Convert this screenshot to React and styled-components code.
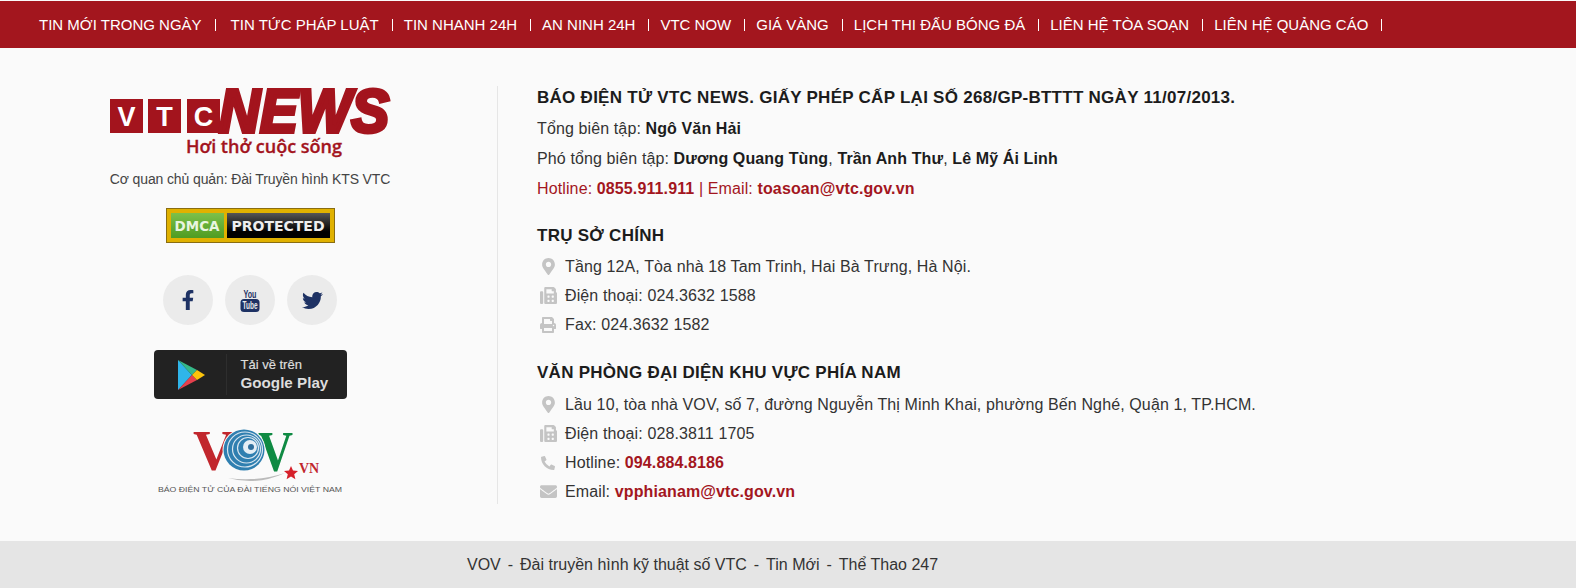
import React from "react";
import styled, { createGlobalStyle } from "styled-components";
import { FaFacebookF, FaTwitter, FaMapMarkerAlt, FaFax, FaPrint, FaPhoneAlt, FaEnvelope } from "react-icons/fa";

const menu = [
  "TIN MỚI TRONG NGÀY",
  "TIN TỨC PHÁP LUẬT",
  "TIN NHANH 24H",
  "AN NINH 24H",
  "VTC NOW",
  "GIÁ VÀNG",
  "LỊCH THI ĐẤU BÓNG ĐÁ",
  "LIÊN HỆ TÒA SOẠN",
  "LIÊN HỆ QUẢNG CÁO",
];

const footerLinks = ["VOV", "Đài truyền hình kỹ thuật số VTC", "Tin Mới", "Thể Thao 247"];

function VtcLogo() {
  return (
    <svg width="282" height="74" viewBox="0 0 282 74" overflow="visible">
      <rect x="1" y="14" width="33" height="34" fill="#a3141d" />
      <rect x="39" y="14" width="33" height="34" fill="#a3141d" />
      <rect x="78" y="14" width="33" height="34" fill="#a3141d" />
      <text x="17.5" y="41" textAnchor="middle" fontFamily="Liberation Sans" fontSize="27" fontWeight="700" fill="#fff">V</text>
      <text x="55.5" y="41" textAnchor="middle" fontFamily="Liberation Sans" fontSize="27" fontWeight="700" fill="#fff">T</text>
      <text x="94.5" y="41" textAnchor="middle" fontFamily="Liberation Sans" fontSize="27" fontWeight="700" fill="#fff">C</text>
      <text x="110" y="47" fontFamily="Liberation Sans" fontSize="62" fontWeight="700" fontStyle="italic" fill="#a3141d" stroke="#a3141d" strokeWidth="4" textLength="170" lengthAdjust="spacingAndGlyphs">NEWS</text>
      <text x="77" y="68" fontFamily="Open Sans" fontSize="17.5" fontWeight="600" fill="#a3141d" stroke="#a3141d" strokeWidth="0.3" textLength="156" lengthAdjust="spacingAndGlyphs">Hơi thở cuộc sống</text>
    </svg>
  );
}

function YoutubeGlyph() {
  return (
    <svg width="20" height="24" viewBox="0 0 20 24" overflow="visible">
      <text x="10" y="9.5" textAnchor="middle" fontFamily="Liberation Sans" fontSize="10" fontWeight="700" fill="#1e3264" textLength="13" lengthAdjust="spacingAndGlyphs">You</text>
      <rect x="0.5" y="11" width="19" height="13" rx="3.5" fill="#1e3264" />
      <text x="10" y="21" textAnchor="middle" fontFamily="Liberation Sans" fontSize="10" fontWeight="700" fill="#eaeaea" textLength="15" lengthAdjust="spacingAndGlyphs">Tube</text>
    </svg>
  );
}

function PlayGlyph() {
  return (
    <svg width="27" height="30" viewBox="0 0 27 30">
      <path d="M0 0 L14 15 L0 30 Z" fill="#2fb5ea" />
      <path d="M0 0 L19 10 L14 15 Z" fill="#35b98a" />
      <path d="M0 30 L19 20 L14 15 Z" fill="#e5404d" />
      <path d="M19 10 L27 15 L19 20 L14 15 Z" fill="#fcc30b" />
    </svg>
  );
}

function VovLogo() {
  return (
    <svg width="186" height="66" viewBox="0 0 186 66" overflow="visible">
      <text x="36" y="40" fontFamily="Liberation Serif" fontSize="58" fontWeight="700" fill="#c1272d" textLength="41" lengthAdjust="spacingAndGlyphs">V</text>
      <text x="101" y="41" fontFamily="Liberation Serif" fontSize="58" fontWeight="700" fill="#0f8a43" textLength="35" lengthAdjust="spacingAndGlyphs">V</text>
      <circle cx="87" cy="20" r="21.5" fill="#fafafa" />
      <circle cx="87" cy="20" r="20.5" fill="#2f7fb0" />
      <circle cx="88" cy="19.5" r="17.5" fill="none" stroke="#d8e6f0" strokeWidth="1.2" />
      <circle cx="89.5" cy="19" r="14" fill="none" stroke="#d8e6f0" strokeWidth="1.2" />
      <circle cx="91" cy="18" r="10.5" fill="none" stroke="#d8e6f0" strokeWidth="1.2" />
      <circle cx="93" cy="17" r="7" fill="#e4eef5" />
      <circle cx="94" cy="17" r="3" fill="#2f6f9c" />
      <path d="M71 48 Q100 56 128 43 Q100 52 71 48 Z" fill="#bbb" />
      <path d="M134 36 l2 4.6 5 .4 -3.8 3.3 1.2 4.9 -4.4 -2.6 -4.4 2.6 1.2 -4.9 -3.8 -3.3 5 -.4 Z" fill="#d6202a" />
      <text x="142" y="43" fontFamily="Liberation Serif" fontSize="14" fontWeight="700" fill="#c1272d">VN</text>
      <text x="93" y="62" textAnchor="middle" fontFamily="Liberation Sans" fontSize="8" fill="#555" textLength="184" lengthAdjust="spacingAndGlyphs">BÁO ĐIỆN TỬ CỦA ĐÀI TIẾNG NÓI VIỆT NAM</text>
    </svg>
  );
}

export default function App() {
  return (
    <Page>
      <GlobalStyle />
      <TopNav>
        {menu.map((item, i) => (
          <NavLink key={item} $first={i === 0}>{item}</NavLink>
        ))}
      </TopNav>

      <Main>
        <Brand>
          <VtcLogo />
          <Agency>Cơ quan chủ quản: Đài Truyền hình KTS VTC</Agency>
          <Dmca>
            <DmcaLeft>DMCA</DmcaLeft>
            <DmcaRight>PROTECTED</DmcaRight>
          </Dmca>
          <Socials>
            <Social><FaFacebookF size={20} /></Social>
            <Social><YoutubeGlyph /></Social>
            <Social><FaTwitter size={21} /></Social>
          </Socials>
          <PlayButton>
            <PlayIcon><PlayGlyph /></PlayIcon>
            <PlayText>
              <small>Tải về trên</small>
              <strong>Google Play</strong>
            </PlayText>
          </PlayButton>
          <VovWrap><VovLogo /></VovWrap>
        </Brand>

        <Info>
          <Heading>BÁO ĐIỆN TỬ VTC NEWS. GIẤY PHÉP CẤP LẠI SỐ 268/GP-BTTTT NGÀY 11/07/2013.</Heading>
          <TopLine>Tổng biên tập: <b>Ngô Văn Hải</b></TopLine>
          <TopLine>Phó tổng biên tập: <b>Dương Quang Tùng</b>, <b>Trần Anh Thư</b>, <b>Lê Mỹ Ái Linh</b></TopLine>
          <TopLine $accent>Hotline: <b>0855.911.911</b> | Email: <b>toasoan@vtc.gov.vn</b></TopLine>

          <Heading $top={20}>TRỤ SỞ CHÍNH</Heading>
          <Line><Icon><FaMapMarkerAlt size={17} /></Icon>Tầng 12A, Tòa nhà 18 Tam Trinh, Hai Bà Trưng, Hà Nội.</Line>
          <Line><Icon><FaFax size={17} /></Icon>Điện thoại: 024.3632 1588</Line>
          <Line><Icon><FaPrint size={16} /></Icon>Fax: 024.3632 1582</Line>

          <Heading $top={21} $bottom={5}>VĂN PHÒNG ĐẠI DIỆN KHU VỰC PHÍA NAM</Heading>
          <Line><Icon><FaMapMarkerAlt size={17} /></Icon>Lầu 10, tòa nhà VOV, số 7, đường Nguyễn Thị Minh Khai, phường Bến Nghé, Quận 1, TP.HCM.</Line>
          <Line><Icon><FaFax size={17} /></Icon>Điện thoại: 028.3811 1705</Line>
          <Line><Icon><FaPhoneAlt size={14} /></Icon>Hotline: <Red>094.884.8186</Red></Line>
          <Line><Icon><FaEnvelope size={17} /></Icon>Email: <Red>vpphianam@vtc.gov.vn</Red></Line>
        </Info>
      </Main>

      <Footer>
        {footerLinks.map((link, i) => (
          <React.Fragment key={link}>
            {i > 0 && <FooterSep>-</FooterSep>}
            <span>{link}</span>
          </React.Fragment>
        ))}
      </Footer>
    </Page>
  );
}

const GlobalStyle = createGlobalStyle`
  * { box-sizing: border-box; }
  body {
    margin: 0;
    background: #fafafa;
    font-family: "Liberation Sans", Arial, sans-serif;
    color: #222;
  }
`;

const Page = styled.div`
  height: 588px;
  overflow: hidden;
  display: flex;
  flex-direction: column;
  padding-top: 1px;
`;

const TopNav = styled.nav`
  height: 47px;
  flex: none;
  background: #a3161e;
  display: flex;
  align-items: center;
  padding-left: 39px;
`;

const NavLink = styled.a`
  color: #fff;
  font-size: 15px;
  line-height: 12px;
  padding-right: 13px;
  margin-right: ${(p) => (p.$first ? "15px" : "11px")};
  border-right: 1px solid #fff;
`;

const Main = styled.main`
  flex: 1;
  display: flex;
  padding: 37px 0 0 100px;
`;

const Brand = styled.div`
  width: 300px;
  display: flex;
  flex-direction: column;
  align-items: center;
`;

const Agency = styled.div`
  margin-top: 11px;
  font-size: 14px;
  letter-spacing: -0.12px;
  line-height: 18px;
  color: #444;
`;

const Dmca = styled.div`
  margin-top: 20px;
  width: 169px;
  height: 35px;
  padding: 4px;
  display: flex;
  gap: 3px;
  background: #e0b100;
  border: 1px solid #8a6d10;
`;

const DmcaLeft = styled.span`
  width: 53px;
  display: flex;
  align-items: center;
  justify-content: center;
  background: linear-gradient(#7cc04a, #4f9c22);
  color: #e9f5e0;
  font-family: "DejaVu Sans", sans-serif;
  font-size: 13.5px;
  font-weight: 700;
`;

const DmcaRight = styled.span`
  flex: 1;
  display: flex;
  align-items: center;
  justify-content: center;
  background: linear-gradient(#555, #000 75%);
  color: #eee;
  font-family: "DejaVu Sans", sans-serif;
  font-size: 14px;
  font-weight: 700;
`;

const Socials = styled.div`
  margin-top: 32px;
  display: flex;
  gap: 12px;
`;

const Social = styled.a`
  width: 50px;
  height: 50px;
  border-radius: 50%;
  background: #ebebeb;
  color: #1e3264;
  display: flex;
  align-items: center;
  justify-content: center;
`;

const PlayButton = styled.a`
  margin-top: 25px;
  width: 193px;
  height: 49px;
  border-radius: 4px;
  background: #222;
  display: flex;
  align-items: center;
  padding: 4px 0;
`;

const PlayIcon = styled.span`
  width: 73px;
  height: 41px;
  display: flex;
  align-items: center;
  padding-left: 24px;
  border-right: 1px solid #2e2e2e;
`;

const PlayText = styled.span`
  margin-left: 14px;
  display: flex;
  flex-direction: column;
  color: #ddd;
  small { font-size: 13px; line-height: 16px; font-weight: 500; -webkit-text-stroke: 0.2px #ddd; }
  strong { font-size: 15.2px; line-height: 19px; }
`;

const VovWrap = styled.div`
  margin-top: 31px;
  line-height: 0;
`;

const Info = styled.div`
  margin-left: 97px;
  height: 418px;
  border-left: 1px solid #e6e6e6;
  padding-left: 39px;
  margin-top: 1px;
`;

const Heading = styled.h3`
  margin: ${(p) => p.$top || 0}px 0 ${(p) => p.$bottom || 4}px;
  font-size: 17px;
  letter-spacing: 0.27px;
  line-height: 24px;
  font-weight: 700;
  color: #1c1c1c;
`;

const Line = styled.div`
  display: flex;
  align-items: center;
  white-space: pre-wrap;
  font-size: 16px;
  letter-spacing: 0.12px;
  line-height: 29.2px;
  color: ${(p) => (p.$accent ? "#a3161e" : "#333")};
  b { font-weight: 700; color: ${(p) => (p.$accent ? "#a3161e" : "#1c1c1c")}; }
`;

const TopLine = styled(Line)`
  line-height: 30px;
`;

const Icon = styled.span`
  width: 28px;
  display: flex;
  justify-content: center;
  padding-right: 6px;
  color: #c4c4c4;
`;

const Red = styled.b`
  && { color: #a3161e; }
`;

const Footer = styled.footer`
  height: 47px;
  flex: none;
  background: #e5e5e5;
  padding-left: 467px;
  font-size: 16px;
  line-height: 47px;
  color: #333;
`;

const FooterSep = styled.span`
  margin: 0 2.5px;
  &::before { content: " "; white-space: pre; }
  &::after { content: " "; white-space: pre; }
`;
